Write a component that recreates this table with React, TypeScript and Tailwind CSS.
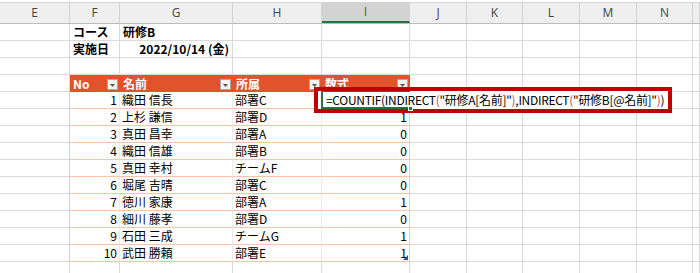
import React from "react";

// Column widths for E..N plus a sliver of the next column
const COLS = ["w-[70px]", "w-[50px]", "w-[113px]", "w-[89px]", "w-[88px]", "w-[57px]", "w-[56px]", "w-[57px]", "w-[57px]", "w-[56px]", "w-[7px]"];
const LETTERS = ["E", "F", "G", "H", "I", "J", "K", "L", "M", "N", ""];

const GRID = "border-[#d9d9d9]";
const SALMON = "border-[#f6c3ab]";

const people: [number, string, string, string][] = [
  [1, "織田 信長", "部署C", ""],
  [2, "上杉 謙信", "部署D", "1"],
  [3, "真田 昌幸", "部署A", "0"],
  [4, "織田 信雄", "部署B", "0"],
  [5, "真田 幸村", "チームF", "0"],
  [6, "堀尾 吉晴", "部署C", "0"],
  [7, "徳川 家康", "部署A", "1"],
  [8, "細川 藤孝", "部署D", "0"],
  [9, "石田 三成", "チームG", "1"],
  [10, "武田 勝頼", "部署E", "1"],
];

function FilterButton() {
  return (
    <span className="ml-auto self-end mb-[2px] w-[11px] h-[11px] shrink-0 bg-[#f3f3f3] border border-[#a8a8a8] flex items-end justify-center pb-[2px]">
      <svg width="5" height="3" viewBox="0 0 5 3">
        <path d="M0 0 L5 0 L2.5 3 Z" fill="#555" />
      </svg>
    </span>
  );
}

function ColumnHeader() {
  return (
    <div className="flex h-[22px] border-t border-b border-t-[#d6d6d6] border-b-[#bcbcbc] bg-[#efefef]">
      {COLS.map((w, i) => (
        <div
          key={i}
          className={`${w} box-border h-full flex items-center justify-center border-r border-[#d4d4d4] text-[12px] font-['Open_Sans',sans-serif] ${
            i === 4 ? "bg-[#d3d3d3] border-b-2 border-b-[#217346] text-[#217346] font-['Liberation_Serif',serif]" : "text-[#444]"
          }`}
        >
          {LETTERS[i]}
        </div>
      ))}
    </div>
  );
}

function PlainRow({ f, g, gRight }: { f?: string; g?: string; gRight?: boolean }) {
  return (
    <div className="flex h-[17px]">
      {COLS.map((w, i) => (
        <div
          key={i}
          className={`${w} box-border h-full border-r border-b ${GRID} flex items-center px-[3px] text-[12px] font-bold text-black ${
            i === 2 && gRight ? "justify-end" : ""
          }`}
        >
          {i === 1 ? f : i === 2 ? g : null}
        </div>
      ))}
    </div>
  );
}

function TableHeader() {
  const heads = ["No", "名前", "所属", "数式"];
  return (
    <div className="flex h-[17px]">
      {COLS.map((w, i) => {
        if (i >= 1 && i <= 4) {
          return (
            <div key={i} className={`${w} box-border h-full bg-[#e1542b] flex items-center pl-[3px] pr-[2px] text-[12px] font-bold text-white`}>
              <span className="leading-[15px]">{heads[i - 1]}</span>
              <FilterButton />
            </div>
          );
        }
        return <div key={i} className={`${w} box-border h-full border-r border-b ${GRID}`} />;
      })}
    </div>
  );
}

function DataRow({ row }: { row: [number, string, string, string] }) {
  const [no, name, dept, val] = row;
  return (
    <div className="flex h-[17px] text-[12px] text-black">
      {COLS.map((w, i) => {
        let cls = `${GRID} border-r border-b`;
        if (i === 0) cls = `border-r ${SALMON} border-b border-b-[#d9d9d9]`;
        if (i >= 1 && i <= 3) cls = `border-b ${SALMON} border-r border-r-[#ececec]`;
        if (i === 4) cls = `border-b border-r ${SALMON}`;
        let content: React.ReactNode = null;
        let align = "";
        if (i === 1) {
          content = no;
          align = "justify-end pr-[2px]";
        } else if (i === 2) {
          content = name;
          align = "pl-[2px]";
        } else if (i === 3) {
          content = dept;
          align = "pl-[2px]";
        } else if (i === 4) {
          content = val;
          align = "justify-end pr-[2px]";
        }
        return (
          <div key={i} className={`${w} box-border h-full flex items-center ${cls} ${align} relative`}>
            {content}
            {i === 4 && no === 10 && (
              <svg className="absolute right-[1px] bottom-[1px]" width="5" height="5" viewBox="0 0 5 5">
                <path d="M5 0 L5 5 L0 5 Z" fill="#3b4aa8" />
              </svg>
            )}
          </div>
        );
      })}
    </div>
  );
}

const paren = "text-[#dc4650]";

export default function App() {
  return (
    <div className="relative w-[700px] h-[273px] overflow-hidden bg-white pt-[2px] font-['Noto_Sans_CJK_JP',sans-serif] leading-[16px]">
      <ColumnHeader />
      <PlainRow f="コース" g="研修B" />
      <PlainRow f="実施日" g="2022/10/14 (金)" gRight />
      <PlainRow />
      <TableHeader />
      {people.map((p) => (
        <DataRow key={p[0]} row={p} />
      ))}
      <PlainRow />

      {/* cell being edited, framed in red */}
      <div className="absolute left-[314px] top-[87px] w-[358px] h-[26px] border-4 border-[#c00000] bg-white">
        <div className="absolute left-[3px] top-0 w-[89px] h-[18px] border-l-2 border-b-2 border-t border-[#217346]">
          <span className="absolute right-[-3px] bottom-[-4px] w-[5px] h-[5px] bg-[#217346] border border-white" />
        </div>
        <div className="absolute left-[8px] top-0 h-[18px] flex items-center whitespace-nowrap text-[12px] tracking-[-0.3px] text-black">
          =COUNTIF(INDIRECT<span className={paren}>(</span>"研修A[名前]"<span className={paren}>)</span>,INDIRECT
          <span className={paren}>(</span>"研修B[@名前]"<span className={paren}>)</span>)
        </div>
      </div>
    </div>
  );
}
